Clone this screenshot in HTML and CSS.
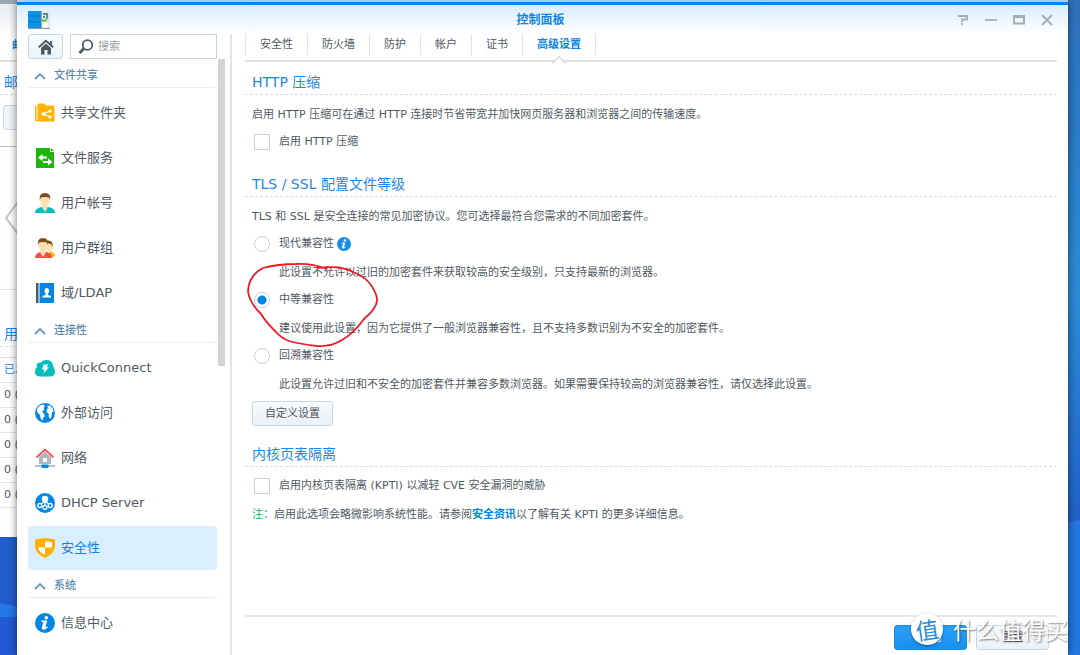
FILE: index.html
```html
<!DOCTYPE html>
<html lang="zh-CN">
<head>
<meta charset="utf-8">
<title>控制面板</title>
<link rel="stylesheet" href="styles.css">
</head>
<body>
<div class="desktop">
  <svg class="wallpaper" viewBox="0 0 1080 655" preserveAspectRatio="none" aria-hidden="true">
    <path d="M0 603 L40 611 V617 H0Z" fill="#2278e8"/>
    <path d="M1060 526 Q1070 522 1080 520 V655 H1060Z" fill="#2277e2"/>
  </svg>

  <div class="back-window" aria-hidden="true">
    <div class="back-tab">邮</div>
    <div class="back-title">邮</div>
    <div class="back-button"></div>
    <div class="back-slide">
      <svg width="16" height="36" viewBox="0 0 16 36"><path d="M14 2 L2 18 L14 34" fill="none" stroke="#c4c4c4" stroke-width="2"/></svg>
    </div>
    <div class="back-title back-title-low">用</div>
    <ul class="back-rows">
      <li class="back-head">已发</li>
      <li>0 (0)</li><li>0 (0)</li><li>0 (0)</li><li>0 (0)</li><li>0 (0)</li>
    </ul>
  </div>

  <div class="window">
    <header class="titlebar">
      <svg class="app-icon" width="22" height="20" viewBox="0 0 22 20" aria-hidden="true">
        <rect x="0" y="1" width="13" height="17" fill="#0b93e8"/>
        <path d="M1 6H12M1 12H12" stroke="#0a6fc0"/>
        <rect x="13" y="1" width="9" height="17" fill="#e3e8ec"/>
        <path d="M13.500 1V18" stroke="#9aa5af"/>
        <path d="M15 4H20M15 7H17" stroke="#4d5862" stroke-width="1.500"/>
        <rect x="18" y="5" width="2" height="4" fill="#19b6c4"/>
        <path d="M14 10l2 1 3-1" stroke="#6fc22a" stroke-width="2" fill="none"/>
        <circle cx="17.500" cy="14.500" r="2.500" fill="#fff"/>
        <path d="M0 18.500H22" stroke="#8d979f"/>
      </svg>
      <h1 class="window-title">控制面板</h1>
      <div class="window-tools">
        <button type="button" aria-label="帮助"><svg width="12" height="12" viewBox="0 0 12 12"><path d="M1 2H10V5.500H5V8M5 9V11" fill="none" stroke="#a3adb5" stroke-width="1.800"/></svg></button>
        <button type="button" aria-label="最小化"><svg width="12" height="12" viewBox="0 0 12 12"><path d="M0 6H12" stroke="#a3adb5" stroke-width="1.800"/></svg></button>
        <button type="button" aria-label="最大化"><svg width="12" height="12" viewBox="0 0 12 12"><path d="M1 2V9.500H11V2" fill="none" stroke="#a3adb5" stroke-width="2"/><path d="M0 2.500H12" stroke="#a3adb5" stroke-width="3"/></svg></button>
        <button type="button" aria-label="关闭"><svg width="12" height="12" viewBox="0 0 12 12"><path d="M1 1L11 11M11 1L1 11" stroke="#a3adb5" stroke-width="1.800"/></svg></button>
      </div>
    </header>

    <div class="body">
      <nav class="sidebar">
        <div class="search-row">
          <button type="button" class="home" aria-label="主页"><svg width="16" height="16" viewBox="0 0 16 16"><path d="M0.800 8.300L8 1.800L15.200 8.300" fill="none" stroke="#4b5966" stroke-width="2"/><path d="M12 2h2v4l-2-2z" fill="#4b5966"/><path d="M3 9L8 4.500L13 9V15.500H9.500V11H6.500V15.500H3Z" fill="#4b5966"/></svg></button>
          <label class="search">
            <svg width="16" height="16" viewBox="0 0 16 16" aria-hidden="true"><circle cx="9.500" cy="6" r="4.800" fill="none" stroke="#4b5966" stroke-width="1.800"/><path d="M6 9.500L1.500 14" stroke="#4b5966" stroke-width="3"/></svg>
            <input type="text" placeholder="搜索" aria-label="搜索">
          </label>
        </div>
        <div class="nav-scroll">
          <div class="nav-list">
            <h2 class="group"><svg width="12" height="8" viewBox="0 0 12 8"><path d="M1 7L6 2L11 7" fill="none" stroke="#6f9ab8" stroke-width="1.800"/></svg>文件共享</h2>
            <a class="item" href="#"><svg width="20" height="20" viewBox="0 0 20 20"><path d="M0 3H1.500V16.500H3V18H0Z" fill="#ffb400"/><path d="M2.500 1.500Q2.500 .5 3.500 .5H9L11 2.500H18.500Q19.500 2.500 19.500 3.500V18.500H2.500Z" fill="#ffb400"/><path d="M15 8L8.500 11L15 14" fill="none" stroke="#fff" stroke-width="1.200"/><circle cx="8.500" cy="11" r="2" fill="#fff"/><circle cx="15" cy="8" r="1.600" fill="#fff"/><circle cx="15" cy="14" r="1.600" fill="#fff"/></svg>共享文件夹</a>
            <a class="item" href="#"><svg width="20" height="20" viewBox="0 0 20 20"><path d="M1 0H15V4H19V20H1Z" fill="#1fb50a"/><path d="M16 0L19 3H16Z" fill="#1fb50a"/><path d="M7 9.500H12M8 14H14" stroke="#fff" stroke-width="2"/><path d="M7.500 6V13L3 9.500ZM13 10.500V17.500L17.500 14Z" fill="#fff"/></svg>文件服务</a>
            <a class="item" href="#"><svg width="20" height="20" viewBox="0 0 20 20"><path d="M0 20Q0 15 7 14H13Q20 15 20 20Z" fill="#00bfbd"/><path d="M7.500 11H12.500V15L10 19L7.500 15Z" fill="#ffe0b2"/><ellipse cx="10" cy="7.500" rx="4.600" ry="5.800" fill="#ffe0b2"/><path d="M4.800 7Q3.800 0 10 0Q16.200 0 15.200 7L14 4.500Q10 3.500 6 4.500Z" fill="#7a5018"/></svg>用户帐号</a>
            <a class="item" href="#"><svg width="20" height="20" viewBox="0 0 20 20"><path d="M14 13Q20 14 20 18L16 20Z" fill="#ffb400"/><ellipse cx="14.500" cy="8.500" rx="3.500" ry="5" fill="#ffe0b2"/><path d="M11 3Q18 1 17.800 9L16 6L12 5Z" fill="#7a5018"/><path d="M0 20Q0 15 6 14H11Q17 15 17 20Z" fill="#ff4848"/><path d="M5.500 11H10.500V15L8 19L5.500 15Z" fill="#ffe0b2"/><ellipse cx="8" cy="7.500" rx="4.400" ry="5.800" fill="#ffe0b2"/><path d="M3 7Q2 0 8 0Q14 0 13 7L11.800 4.500Q8 3.500 4.200 4.500Z" fill="#7a5018"/></svg>用户群组</a>
            <a class="item" href="#"><svg width="20" height="20" viewBox="0 0 20 20"><path d="M1 0H3.500V20H1Z" fill="#4b5966"/><path d="M4.500 0H19V20H4.500Z" fill="#0086e5"/><path d="M9.500 8Q9.500 5 11.800 5Q14 5 14 8Q14 9.500 13 10.500V12L16 13V14.500H7.500V13L10.500 12V10.500Q9.500 9.500 9.500 8Z" fill="#fff"/></svg>域/LDAP</a>

            <h2 class="group"><svg width="12" height="8" viewBox="0 0 12 8"><path d="M1 7L6 2L11 7" fill="none" stroke="#6f9ab8" stroke-width="1.800"/></svg>连接性</h2>
            <a class="item" href="#"><svg width="20" height="20" viewBox="0 0 20 20"><path d="M4.500 18.500Q0 18 0 13.500Q0 10 2 9Q1 4 6 4.500Q8 1.500 12 2Q17.500 2.500 18 8Q20 10 20 13.500Q20 18 16 18.500Z" fill="#00bfbd"/><path d="M8.500 6.500H13L12 9.500H14L8.500 15.500L9.500 11.500H7Z" fill="#fff"/></svg>QuickConnect</a>
            <a class="item" href="#"><svg width="20" height="20" viewBox="0 0 20 20"><circle cx="10" cy="10" r="10" fill="#0086e5"/><path d="M2 6Q4 2 8 1.500L10 3L8.500 5L9.500 7L7 8L9 11L10 13L8 15L7.500 18L5.500 15L5 12L2 9ZM12 3L15 2.500L18 6L18.500 9L17 9L16.500 14L15 16L13.500 13L14 11L11.500 9L12 6L13.500 5Z" fill="#fff"/></svg>外部访问</a>
            <a class="item" href="#"><svg width="20" height="20" viewBox="0 0 20 20"><path d="M4 9L10 3.500L16 9V16H4Z" fill="#adb8c3"/><path d="M8 10H12V14H8Z" fill="#fff"/><path d="M1.500 9.500L10 1.500L18.500 9.500" fill="none" stroke="#ff5252" stroke-width="1.800"/><path d="M0 18H20" stroke="#a0adb9" stroke-width="1.600"/><rect x="6.500" y="16.500" width="7" height="3.500" rx="1" fill="#0086e5"/></svg>网络</a>
            <a class="item" href="#"><svg width="20" height="20" viewBox="0 0 20 20"><circle cx="10" cy="10" r="10" fill="#0086e5"/><path d="M10 8L5 12M10 8V13M10 8L15 12" stroke="#fff" stroke-width="1.200"/><circle cx="10" cy="6" r="3.300" fill="#fff"/><g fill="#0086e5" stroke="#fff" stroke-width="1.300"><circle cx="4.800" cy="12.500" r="2"/><circle cx="10" cy="14.500" r="2"/><circle cx="15.200" cy="12.500" r="2"/></g></svg>DHCP Server</a>
            <a class="item selected" href="#" aria-current="page"><svg width="20" height="20" viewBox="0 0 20 20"><path d="M0 1.500Q10-1 20 1.500V9Q19 16 10 20Q1 16 0 9Z" fill="#ffb000"/><path d="M10 3.500Q14 3.500 17 4.200V9.500H10ZM3 9.500H10V17Q4 14 3 9.500Z" fill="#fff"/></svg>安全性</a>

            <h2 class="group"><svg width="12" height="8" viewBox="0 0 12 8"><path d="M1 7L6 2L11 7" fill="none" stroke="#6f9ab8" stroke-width="1.800"/></svg>系统</h2>
            <a class="item" href="#"><svg width="20" height="20" viewBox="0 0 20 20"><circle cx="10" cy="10" r="10" fill="#0086e5"/><circle cx="11.300" cy="4.800" r="1.800" fill="#fff"/><path d="M6.500 7.500H12.300L10.500 14Q10.800 14.800 12.600 13.200L12.800 14.200Q10 17.200 7.800 16.600Q6.400 16 6.900 14.500L8.200 9H6.300Z" fill="#fff"/></svg>信息中心</a>
          </div>
          <div class="scroll-thumb"></div>
        </div>
      </nav>

      <main class="main">
        <div class="tabs" role="tablist">
          <button type="button" role="tab">安全性</button>
          <button type="button" role="tab">防火墙</button>
          <button type="button" role="tab">防护</button>
          <button type="button" role="tab">帐户</button>
          <button type="button" role="tab">证书</button>
          <button type="button" role="tab" class="active" aria-selected="true">高级设置<svg class="notch" width="14" height="9" viewBox="0 0 14 9" aria-hidden="true"><path d="M1 8L7 1.500L13 8V9H1Z" fill="#fff"/><path d="M0 7.500H1.500L7 1.500L12.500 7.500H14" fill="none" stroke="#dcdcdc" stroke-width="1.500"/></svg></button>
        </div>

        <div class="content">
          <section class="section">
            <h2>HTTP 压缩</h2>
            <p>启用 HTTP 压缩可在通过 HTTP 连接时节省带宽并加快网页服务器和浏览器之间的传输速度。</p>
            <label class="option"><input type="checkbox"><span>启用 HTTP 压缩</span></label>
          </section>

          <section class="section">
            <h2>TLS / SSL 配置文件等级</h2>
            <p>TLS 和 SSL 是安全连接的常见加密协议。您可选择最符合您需求的不同加密套件。</p>
            <label class="option"><input type="radio" name="tls"><span>现代兼容性</span><svg class="info" width="14" height="14" viewBox="0 0 20 20" aria-hidden="true"><circle cx="10" cy="10" r="10" fill="#1a8fe8"/><circle cx="11.300" cy="4.800" r="1.700" fill="#fff"/><path d="M7 8H11.800L10 14.500Q10.500 15 12.300 13.500L12.500 14.300Q10 17 8 16.500Q6.800 16 7.200 14.500L8.600 9.200H6.800Z" fill="#fff"/></svg></label>
            <p class="hint">此设置不允许以过旧的加密套件来获取较高的安全级别，只支持最新的浏览器。</p>
            <label class="option"><input type="radio" name="tls" checked><span>中等兼容性</span></label>
            <p class="hint">建议使用此设置，因为它提供了一般浏览器兼容性，且不支持多数识别为不安全的加密套件。</p>
            <label class="option"><input type="radio" name="tls"><span>回溯兼容性</span></label>
            <p class="hint">此设置允许过旧和不安全的加密套件并兼容多数浏览器。如果需要保持较高的浏览器兼容性，请仅选择此设置。</p>
            <button type="button" class="button custom">自定义设置</button>
          </section>

          <section class="section">
            <h2>内核页表隔离</h2>
            <label class="option"><input type="checkbox"><span>启用内核页表隔离 (KPTI) 以减轻 CVE 安全漏洞的威胁</span></label>
            <p><span class="note">注：</span>启用此选项会略微影响系统性能。请参阅<a href="#">安全资讯</a>以了解有关 KPTI 的更多详细信息。</p>
          </section>
        </div>

        <footer class="footer">
          <button type="button" class="button primary">应用</button>
          <button type="button" class="button">重置</button>
        </footer>
      </main>
    </div>
  </div>

  <svg class="annotation" width="136" height="90" viewBox="0 0 136 90" aria-hidden="true"><path d="M72 7Q96 4 108 11Q127 18 132 37Q133 47 119 58Q108 73 97 79Q86 86 72 85Q55 83 44 80Q36 77 30 70Q20 60 16 53Q4 41 3 30Q4 14 18 7Q33 3 51 3Q66 2 82 8" fill="none" stroke="#f01820" stroke-width="1.800"/></svg>

  <div class="watermark" aria-hidden="true"><span class="watermark-badge">值</span><span>什么值得买</span></div>
</div>
</body>
</html>
```
FILE: styles.css
```css
* { box-sizing: border-box; }

body {
  margin: 0;
  font: 11px/16px "DejaVu Sans", "Noto Sans CJK SC", sans-serif;
  color: #505a64;
}

h1, h2, p, ul { margin: 0; padding: 0; }
button, input { font: inherit; color: inherit; }
svg { flex: none; }
a { color: #0086e5; text-decoration: none; }

.desktop {
  position: relative;
  height: 100vh;
  overflow: hidden;
  background: linear-gradient(#2f72bd 0%, #2a7cc8 20%, #2a8cd6 45%, #2470d0 68%, #2060c8 80%, #2258d4 100%);
}

.wallpaper { position: absolute; inset: 0; width: 100%; height: 100%; }

/* Window partly hidden behind the control panel */
.back-window {
  position: absolute;
  left: 0;
  top: 0;
  width: 200px;
  height: 537px;
  padding-top: 34px;
  border-top: 4px solid #9aa6b4;
  background: linear-gradient(#e9edf1, #fff 34px);
}
.back-tab {
  height: 24px;
  padding-left: 12px;
  border-bottom: 2px solid #ddd;
  color: #0086e5;
  font-weight: bold;
  line-height: 16px;
}
.back-title {
  height: 33px;
  padding: 12px 0 0 4px;
  border-bottom: 1px dashed #d3dfe9;
  color: #1f87e5;
  font-size: 14px;
  line-height: 16px;
}
.back-button {
  height: 25px;
  margin: 10px 0 16px 3px;
  border: 1px solid #c9d6e2;
  border-radius: 3px;
  background: #f0f5fa;
}
.back-slide {
  display: flex;
  align-items: center;
  height: 144px;
  padding-left: 4px;
  border-top: 1px solid #bbb;
  border-bottom: 1px solid #e4e4e4;
}
.back-title-low { height: 57px; padding-top: 36px; }
.back-rows { margin-top: 10px; border-top: 1px solid #d3dfe9; list-style: none; }
.back-rows li {
  height: 25px;
  padding-left: 4px;
  border-bottom: 1px solid #dfe8f0;
  line-height: 24px;
}
.back-rows .back-head { color: #1f87e5; }

/* Control panel window */
.window {
  position: absolute;
  inset: 0 12px 0 17px;
  display: flex;
  flex-direction: column;
  border-top: 2px solid #a9cdf0;
  background: #fff;
  box-shadow: 0 0 8px rgba(0, 0, 0, .55);
}
.titlebar {
  display: grid;
  grid-template-columns: 1fr auto 1fr;
  align-items: center;
  height: 32px;
  padding: 0 15px 0 11px;
  border-top: 3px solid #0086e5;
  background: linear-gradient(#d8ecfc, #fff);
}
.window-title { color: #0c86e6; font-size: 12px; font-weight: bold; }
.window-tools { display: flex; justify-content: flex-end; gap: 16px; }
.window-tools button {
  display: flex;
  padding: 0;
  border: 0;
  background: none;
}

.body { display: flex; flex: 1; min-height: 0; }

.sidebar {
  display: flex;
  flex: none;
  flex-direction: column;
  width: 215px;
  padding-left: 11px;
  border-right: 2px solid #e2e5e8;
}
.search-row { display: flex; gap: 7px; height: 25px; padding-right: 13px; }
.home {
  display: flex;
  flex: none;
  align-items: center;
  justify-content: center;
  width: 35px;
  padding: 0;
  border: 1px solid #c9d6e2;
  border-radius: 3px;
  background: linear-gradient(#f9fbfd, #ecf2f8);
}
.search {
  display: flex;
  flex: 1;
  align-items: center;
  gap: 4px;
  min-width: 0;
  padding-left: 7px;
  border: 1px solid #c9d6e2;
}
.search input {
  flex: 1;
  min-width: 0;
  padding: 0;
  border: 0;
  outline: 0;
  background: none;
}
.search input::placeholder { color: #9aa3ab; opacity: 1; }

.nav-scroll { display: flex; flex: 1; gap: 1px; min-height: 0; overflow: hidden; }
.nav-list { width: 189px; padding-top: 2px; }
.scroll-thumb { width: 7px; height: 307px; background: #d3d4d6; }
.group {
  display: flex;
  align-items: center;
  gap: 8px;
  height: 27px;
  margin-bottom: 3px;
  padding: 4px 0 0 6px;
  border-bottom: 1px solid #e6eef4;
  color: #5b8aac;
  font-size: 11px;
  font-weight: 500;
}
.item {
  display: flex;
  align-items: center;
  gap: 6px;
  height: 44px;
  margin-bottom: 1px;
  padding-left: 7px;
  border-radius: 3px;
  color: #505a64;
  font-size: 13px;
}
.item.selected { background: #d9eeff; color: #0c86e6; }

.main { display: flex; flex: 1; flex-direction: column; min-width: 0; padding: 0 11px 0 13px; }
.tabs {
  display: flex;
  align-items: flex-start;
  height: 28px;
  border-bottom: 2px solid #e0e0e0;
}
.tabs button {
  position: relative;
  height: 21px;
  padding: 0 14px;
  border: 0;
  border-right: 1px solid #dae3ed;
  background: none;
  line-height: 21px;
}
.tabs button:first-child { border-left: 1px solid #dae3ed; }
.tabs .active { color: #0c86e6; font-weight: bold; }
.notch { position: absolute; left: 50%; top: 100%; margin-left: -7px; }

.content { display: flex; flex: 1; flex-direction: column; gap: 16px; padding-top: 8px; }
.section h2 {
  height: 25px;
  margin-bottom: 5px;
  padding-left: 7px;
  border-bottom: 1px dashed #d3dfe9;
  color: #1f87e5;
  font-size: 14px;
  font-weight: normal;
  line-height: 24px;
}
.section p { padding-left: 7px; line-height: 30px; height: 28px; }
.section .hint { padding-left: 34px; }
.section a { font-weight: bold; }
.note { color: #1faa6b; }
.option { display: flex; align-items: center; height: 28px; padding-left: 9px; line-height: 30px; }
.option input {
  appearance: none;
  width: 16px;
  height: 16px;
  margin: 0 9px 0 0;
  border: 1px solid #c5d2df;
  background: #fff;
}
.option input[type="radio"] { border-radius: 50%; }
.option input[type="radio"]:checked { background: radial-gradient(circle, #0086e5 4px, #fff 5px); }
.info { margin-left: 3px; }

.button {
  width: 73px;
  height: 25px;
  padding: 0;
  border: 1px solid #c9d6e2;
  border-radius: 3px;
  background: linear-gradient(#f8fafc, #ebf1f7);
}
.custom { display: block; width: 81px; margin: 3px 0 0 7px; }
.primary { border-color: #1c8ce0; background: linear-gradient(#2ba0f8, #1890ec); color: #fff; }
.footer {
  display: flex;
  justify-content: flex-end;
  gap: 9px;
  padding: 8px 8px 5px;
  border-top: 2px solid #e6e8e9;
}

/* Hand-drawn circle over the selected option */
.annotation { position: absolute; left: 245px; top: 261px; }

.watermark {
  position: absolute;
  right: 12px;
  bottom: 10px;
  display: flex;
  align-items: center;
  gap: 10px;
  color: #fff;
  font: 23px/32px "Noto Sans CJK SC", sans-serif;
  text-shadow: 1px 1px 2px rgba(0, 0, 0, .5);
}
.watermark-badge {
  width: 32px;
  height: 32px;
  border-radius: 50%;
  background: #fff;
  box-shadow: 0 1px 3px rgba(0, 0, 0, .4);
  color: #2a8bd4;
  text-align: center;
  text-shadow: none;
  transform: rotate(-8deg);
}
```
